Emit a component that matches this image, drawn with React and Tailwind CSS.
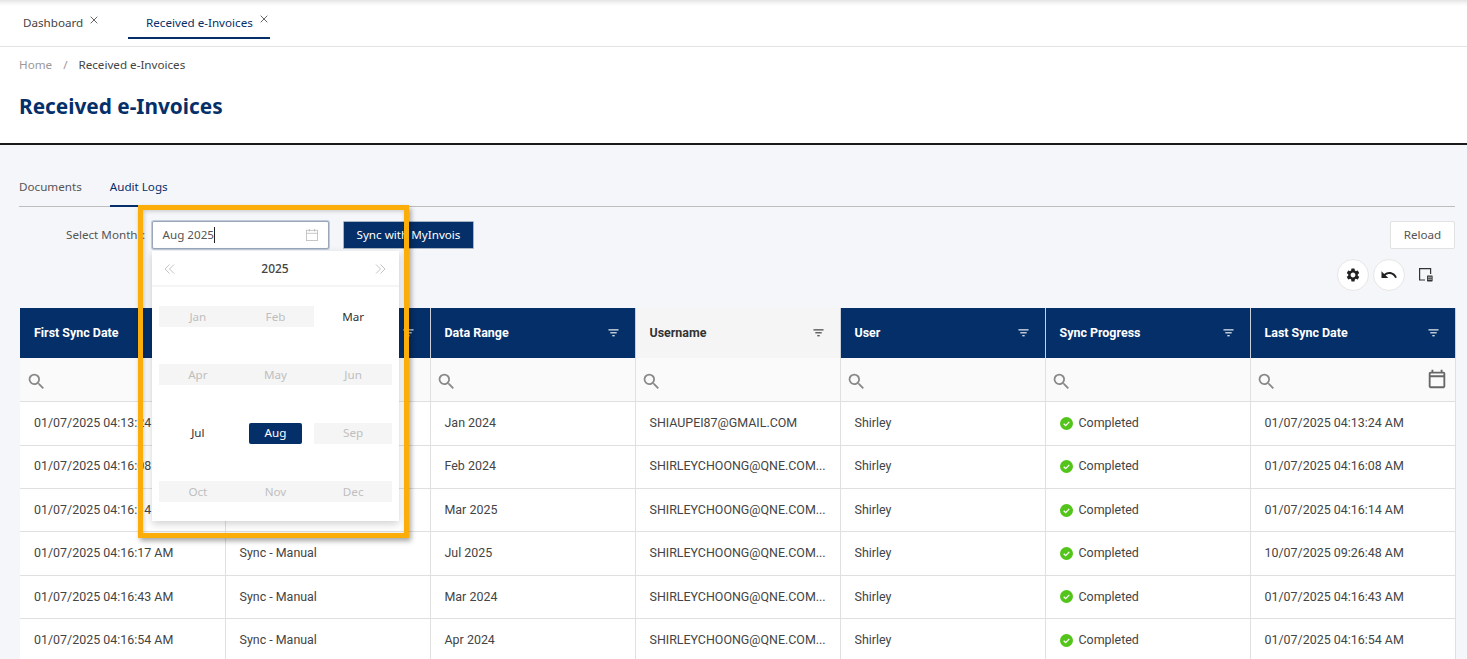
import React from "react";
import { MdSearch, MdSettings, MdUndo } from "react-icons/md";

const FilterIcon = ({ className }) => (
  <svg viewBox="0 0 12 8" className={className} fill="currentColor">
    <rect x="0.5" y="0" width="11" height="1.2" />
    <rect x="2.5" y="3.2" width="7" height="1.2" />
    <rect x="4.7" y="6.4" width="2.6" height="1.2" />
  </svg>
);

const CloseIcon = () => (
  <svg viewBox="0 0 8 8" className="w-[8px] h-[8px]" fill="none" stroke="#555" strokeWidth="0.9">
    <path d="M0.7 0.7l6.6 6.6M7.3 0.7L0.7 7.3" />
  </svg>
);

const DoubleChevron = ({ flip }) => (
  <svg viewBox="0 0 11 10" className={`w-[11px] h-[10px] ${flip ? "rotate-180" : ""}`} fill="none" stroke="#c4c4c4" strokeWidth="1">
    <path d="M5.5 0.5L1 5l4.5 4.5M10 0.5L5.5 5l4.5 4.5" />
  </svg>
);

const columns = ["First Sync Date", "", "Data Range", "Username", "User", "Sync Progress", "Last Sync Date"];

const rows = [
  ["01/07/2025 04:13:24 AM", "", "Jan 2024", "SHIAUPEI87@GMAIL.COM", "01/07/2025 04:13:24 AM"],
  ["01/07/2025 04:16:08 AM", "", "Feb 2024", "SHIRLEYCHOONG@QNE.COM...", "01/07/2025 04:16:08 AM"],
  ["01/07/2025 04:16:14 AM", "", "Mar 2025", "SHIRLEYCHOONG@QNE.COM...", "01/07/2025 04:16:14 AM"],
  ["01/07/2025 04:16:17 AM", "Sync - Manual", "Jul 2025", "SHIRLEYCHOONG@QNE.COM...", "10/07/2025 09:26:48 AM"],
  ["01/07/2025 04:16:43 AM", "Sync - Manual", "Mar 2024", "SHIRLEYCHOONG@QNE.COM...", "01/07/2025 04:16:43 AM"],
  ["01/07/2025 04:16:54 AM", "Sync - Manual", "Apr 2024", "SHIRLEYCHOONG@QNE.COM...", "01/07/2025 04:16:54 AM"],
];

const months = [
  ["Jan", "off"], ["Feb", "off"], ["Mar", "on"],
  ["Apr", "off"], ["May", "off"], ["Jun", "off"],
  ["Jul", "on"], ["Aug", "sel"], ["Sep", "off"],
  ["Oct", "off"], ["Nov", "off"], ["Dec", "off"],
];

const Completed = () => (
  <span className="flex items-center gap-[6px]">
    <svg viewBox="0 0 14 14" className="w-[13px] h-[13px] shrink-0">
      <circle cx="7" cy="7" r="7" fill="#52c41a" />
      <path d="M4 7.2l2.1 2.1L10 5.2" stroke="#fff" strokeWidth="1.4" fill="none" />
    </svg>
    Completed
  </span>
);

const Cell = ({ first, children }) => (
  <div className={`h-full pr-[13px] flex items-center border-r border-b border-[#e0e0e0] whitespace-nowrap overflow-hidden ${first ? "pl-[14px]" : "pl-[13.5px]"}`}>
    {children}
  </div>
);

function MonthCell({ name, state }) {
  if (state === "off")
    return <div className="h-[21px] bg-[#f5f5f5] text-[#bfbfbf] flex items-center justify-center">{name}</div>;
  if (state === "sel")
    return (
      <div className="h-[21px] flex items-center justify-center">
        <span className="w-[53px] h-[21px] rounded-[2px] bg-[#052f69] text-white flex items-center justify-center">{name}</span>
      </div>
    );
  return <div className="h-[21px] text-[#333] flex items-center justify-center">{name}</div>;
}

const CalendarSmall = () => (
  <svg viewBox="0 0 14 14" className="absolute right-[10px] top-[7px] w-[12px] h-[12px]" fill="none" stroke="#bdbdbd" strokeWidth="1">
    <rect x="0.5" y="1.5" width="13" height="12" />
    <path d="M0.5 5h13M4 0v3M10 0v3" />
  </svg>
);

export default function App() {
  return (
    <div className="relative w-[1467px] h-[659px] overflow-hidden bg-[#f5f6fa] text-[#444] font-['Noto_Sans',sans-serif] text-[11.65px]">
      {/* Top tabs */}
      <div className="h-[47px] bg-white border-b border-[#e4e4e4] bg-gradient-to-b from-[#e4e4e4] via-[#f4f4f4] to-white bg-[length:100%_6px] bg-no-repeat flex items-start">
        <div className="w-[128px] flex items-start pl-[23px] pt-[14px] text-[#444] whitespace-nowrap">
          <span>Dashboard</span>
          <span className="ml-[6.5px] mt-[2px]"><CloseIcon /></span>
        </div>
        <div className="h-[39px] w-[142px] border-b-2 border-[#052f69] flex items-start pl-[18px] pt-[14px] text-[#052f69] whitespace-nowrap">
          <span>Received e-Invoices</span>
          <span className="ml-[7.5px] mt-[1px]"><CloseIcon /></span>
        </div>
      </div>

      {/* Page header */}
      <div className="h-[98px] bg-white border-b-2 border-[#1a1a1a] px-[19px] pt-[10px]">
        <div className="flex items-center h-[16px]">
          <span className="text-[#999]">Home</span>
          <span className="text-[#999] mx-[11px]">/</span>
          <span className="text-[#444]">Received e-Invoices</span>
        </div>
        <h1 className="mt-[18px] text-[20.8px] leading-[30px] font-bold text-[#052f69] whitespace-nowrap">Received e-Invoices</h1>
      </div>

      {/* Body */}
      <div className="pl-[19px] pr-[12px]">
        <div className="h-[62px] pt-[33px] border-b border-[#bdbdbd] flex items-start gap-[28px]">
          <span className="h-[29px] leading-[17px] text-[#555]">Documents</span>
          <span className="h-[29px] leading-[17px] text-[#052f69] border-b-2 border-[#052f69]">Audit Logs</span>
        </div>

        <div className="h-[101px] relative">
          <div className="flex items-start pt-[14px]">
            <span className="ml-[47px] mr-[7px] w-[79px] h-[28px] flex items-center justify-between whitespace-nowrap text-[#555]">
              <span>Select Month</span>
              <span className="relative z-30">:</span>
            </span>
            <div className="relative w-[177px] h-[28px] bg-white border border-[#9aa7b8] rounded-[2px] shadow-[0_0_0_1px_rgba(5,47,105,0.22)] flex items-center pl-[9.5px] pr-[10px] text-[#555]">
              <span className="border-r border-[#222] leading-[16px]">Aug 2025</span>
              <CalendarSmall />
              {/* Month picker dropdown */}
              <div className="absolute -left-px top-[29px] z-10 w-[247px] h-[270px] bg-white shadow-[0_3px_8px_rgba(0,0,0,0.18)]">
                <div className="h-[36px] pt-[2px] border-b-2 border-[#f5f5f5] flex items-center justify-between pl-[12px] pr-[13px]">
                  <DoubleChevron />
                  <span className="font-medium text-[#444] text-[12px]">2025</span>
                  <DoubleChevron flip />
                </div>
                <div className="grid grid-cols-3 px-[7px] pt-[19px] gap-y-[37.3px]">
                  {months.map(([n, s]) => <MonthCell key={n} name={n} state={s} />)}
                </div>
              </div>
            </div>
            <button className="ml-[14px] w-[131px] h-[28px] bg-[#052f69] text-white border border-[#a9b4c2] rounded-[1px] whitespace-nowrap">Sync with MyInvois</button>
            <button className="ml-auto w-[65px] h-[28px] bg-white border border-[#e2e2e2] rounded-[2px] text-[#555]">Reload</button>
          </div>
          <div className="absolute right-0 top-[52px] pr-[13px] flex items-center gap-[4px] text-[#222]">
            <span className="w-[32px] h-[32px] rounded-full bg-white border border-[#e6e6e6] flex items-center justify-center">
              <MdSettings className="w-[16px] h-[16px]" />
            </span>
            <span className="w-[32px] h-[32px] rounded-full bg-white border border-[#e6e6e6] flex items-center justify-center">
              <MdUndo className="w-[18px] h-[18px]" />
            </span>
            <span className="w-[32px] h-[32px] ml-[1px] flex items-center justify-center">
              <svg viewBox="0 0 16 16" className="w-[16px] h-[16px]" fill="none" stroke="#333" strokeWidth="1.2">
                <path d="M7 13H1.6V1.6h11V7" />
                <rect x="9" y="8.4" width="5.6" height="6" rx="0.6" fill="#333" stroke="none" />
                <path d="M9.8 10.2h4M9.8 12.2h4" stroke="#fff" strokeWidth="0.7" />
              </svg>
            </span>
          </div>
        </div>

        {/* Table */}
        <div className="grid grid-cols-[206px_repeat(6,205px)] w-[1436px] ml-[1px] font-['Roboto',sans-serif] text-[12.45px] text-[#444] bg-white grid-rows-[50px_44.3px_repeat(6,43.35px)]">
          {columns.map((c, i) => {
            const active = c === "Username";
            return (
              <div key={i} className={`flex items-center justify-between pr-[16px] font-bold border-r border-[#c9d0da] ${i === 0 ? "pl-[14px]" : "pl-[13.5px]"} ${active ? "bg-[#f5f5f5] text-[#333]" : "bg-[#052f69] text-white"}`}>
                <span>{c}</span>
                <FilterIcon className="w-[11px] h-[8px]" />
              </div>
            );
          })}
          {columns.map((c, i) => (
            <div key={i} className={`bg-[#fafafa] border-r border-b border-[#e0e0e0] flex items-center justify-between pr-[7px] pt-[3px] text-[#888] ${i === 0 ? "pl-[6px]" : "pl-[5px]"}`}>
              <MdSearch className="w-[21px] h-[21px]" />
              {i === 6 && (
                <svg viewBox="0 0 24 24" className="w-[22px] h-[22px] -mt-[4px] text-[#666]" fill="currentColor">
                  <path d="M19 4h-1V2h-2v2H8V2H6v2H5c-1.11 0-1.99.9-1.99 2L3 20c0 1.1.89 2 2 2h14c1.1 0 2-.9 2-2V6c0-1.1-.9-2-2-2zm0 16H5V10h14v10zm0-12H5V6h14v2z" />
                </svg>
              )}
            </div>
          ))}
          {rows.map((r) => (
            <React.Fragment key={r[0]}>
              <Cell first>{r[0]}</Cell>
              <Cell>{r[1]}</Cell>
              <Cell>{r[2]}</Cell>
              <Cell>{r[3]}</Cell>
              <Cell>Shirley</Cell>
              <Cell><Completed /></Cell>
              <Cell>{r[4]}</Cell>
            </React.Fragment>
          ))}
        </div>
      </div>

      {/* Orange annotation rectangle */}
      <div className="absolute left-[138px] top-[205px] w-[271px] h-[333px] z-20 border-[5.5px] border-[#fbae0a] shadow-[2px_3px_5px_rgba(0,0,0,0.35),inset_1px_1px_4px_rgba(0,0,0,0.2)] pointer-events-none" />
    </div>
  );
}
